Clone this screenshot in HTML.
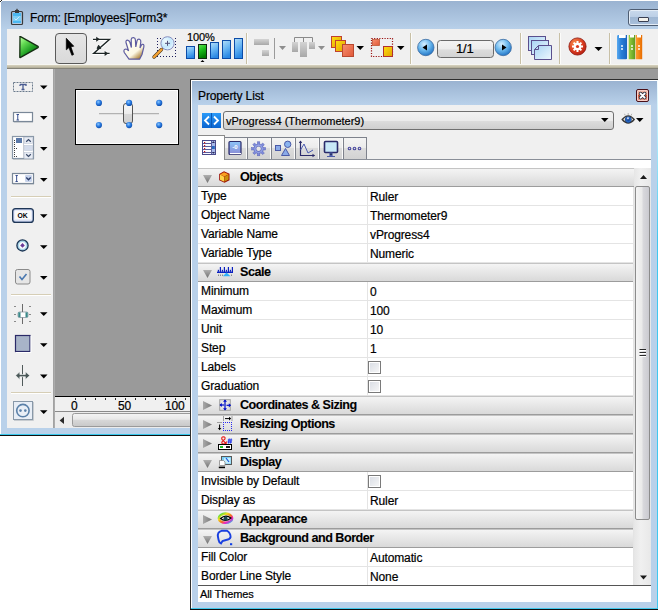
<!DOCTYPE html>
<html><head><meta charset="utf-8">
<style>
*{margin:0;padding:0;box-sizing:border-box}
html,body{width:658px;height:610px;overflow:hidden;background:#fff;font-family:"Liberation Sans",sans-serif;font-size:12px;color:#000}
.a{position:absolute}
svg{position:absolute;overflow:visible}
.sep{position:absolute;width:2px;top:33px;height:31px;background:#c8c0a6;border-right:1px solid #fcfcfa}
.tri{position:absolute;width:0;height:0;border-left:4px solid transparent;border-right:4px solid transparent;border-top:4px solid #000}
.t{position:absolute;white-space:nowrap;line-height:14px}
.t,.rl,.rv{-webkit-text-stroke:0.2px #000;letter-spacing:-0.12px}
.hd{position:absolute;left:198px;width:436px;height:19px;border-top:1px solid #c4c4c4;border-bottom:1px solid #9c9c9c;background:linear-gradient(#f4f4f4,#d9d9d9)}
.ht{position:absolute;left:240px;font-weight:bold;font-size:12.6px;line-height:19px;padding-top:0;letter-spacing:-0.5px;white-space:nowrap;-webkit-text-stroke:0.1px #000 !important}
.rw{position:absolute;left:198px;width:435px;height:19px;border-bottom:1px solid #e4e4e4;background:#fff}
.rw:after{content:"";position:absolute;left:169px;top:0;width:1px;height:18px;background:#e4e4e4}
.rl{position:absolute;left:201px;font-size:12px;line-height:18px;white-space:nowrap}
.rv{position:absolute;left:370px;font-size:12px;line-height:18px;padding-top:1px;white-space:nowrap}
.cb{position:absolute;left:368px;width:13px;height:13px;border:1px solid #7a7a7a;background:linear-gradient(135deg,#d8dce4,#f8f8f8);box-shadow:inset 0 0 0 1px #fff}
</style></head><body>
<!-- ============ MAIN WINDOW ============ -->
<div class="a" style="left:1px;top:1px;width:657px;height:433px;background:#b9d1ea"></div>
<div class="a" style="left:0;top:434px;width:190px;height:1px;background:#38c8ec"></div>
<div class="a" style="left:0;top:435px;width:190px;height:1px;background:#101010"></div>
<div class="a" style="left:1px;top:1px;width:657px;height:28px;background:linear-gradient(#9ab3d1,#b8d0e9)"></div>
<div class="a" style="left:0;top:1px;width:1px;height:1px;background:#222"></div>
<div class="a" style="left:1px;top:0;width:1px;height:1px;background:#222"></div>
<div class="a" style="left:1px;top:1px;width:1px;height:1px;background:#e8eef4"></div>
<!-- title icon -->
<svg style="left:0;top:0" width="40" height="30">
 <rect x="11.5" y="11.5" width="11" height="13" rx="1" fill="none" stroke="#3a3a3a" stroke-width="1.2"/>
 <rect x="13" y="13" width="8" height="10" fill="#4cb8f0"/>
 <rect x="13" y="16" width="8" height="5" fill="#7ccff6"/>
 <rect x="15" y="10" width="4" height="3" fill="#3a3a3a"/>
 <rect x="16.3" y="8.8" width="1.4" height="2" fill="#3a3a3a"/>
 <path d="M14.5 18.5 L16 20 L19.5 16.5" stroke="#d8f0fc" stroke-width="0.9" fill="none"/>
</svg>
<div class="t" style="left:30px;top:11px;font-size:12px;color:#000">Form: [Employees]Form3*</div>
<!-- minimize button -->
<div class="a" style="left:628px;top:9px;width:40px;height:17px;border:1px solid #4e5d72;border-radius:3px;background:linear-gradient(#c9d9ec 0%,#bccfe6 45%,#9fb7d3 50%,#a9c0dc 100%);box-shadow:inset 0 0 0 1px #e4edf7"></div>
<div class="a" style="left:638px;top:17px;width:11px;height:5px;border:1px solid #3a3f52;border-radius:1px;background:#f4f2ec"></div>

<!-- toolbar -->
<div class="a" style="left:7px;top:29px;width:651px;height:36px;background:#f0f0f0"></div>
<div class="a" style="left:7px;top:64px;width:651px;height:1px;background:#f6f6f2"></div>
<div class="a" style="left:7px;top:65px;width:651px;height:1px;background:#d2cdb9"></div>
<div class="a" style="left:7px;top:66px;width:651px;height:1px;background:#c6c1ac"></div>
<div class="a" style="left:7px;top:67px;width:651px;height:1px;background:#b6b19c"></div>
<div class="a" style="left:7px;top:68px;width:651px;height:1px;background:#858379"></div>

<!-- play -->
<svg style="left:0;top:0" width="60" height="64">
 <defs><linearGradient id="gp" x1="0" y1="0.1" x2="0.7" y2="1"><stop offset="0" stop-color="#b0ff98"/><stop offset="0.3" stop-color="#60d850"/><stop offset="0.65" stop-color="#20a024"/><stop offset="1" stop-color="#0a600c"/></linearGradient></defs>
 <path d="M20 37 Q19.5 36.3 20.6 36.7 L38 46.4 Q38.8 47 38 47.6 L20.6 57.4 Q19.5 57.8 19.8 57 Z" fill="url(#gp)" stroke="#142e12" stroke-width="1.3"/>
</svg>
<!-- selected arrow button -->
<div class="a" style="left:55px;top:33px;width:32px;height:31px;border:1px solid #5a5a5a;border-radius:4px;background:linear-gradient(#e6e6e6,#d9d9d9)"></div>
<svg style="left:0;top:0" width="100" height="64">
 <path d="M66.3 38.3 L66.3 49.8 L68.9 47.6 L71.9 55.3 L73.6 54.5 L70.9 46.8 L73.8 46.2 Z" fill="#000" stroke="#000" stroke-width="0.7" stroke-linejoin="round"/>
</svg>
<!-- Z icon -->
<svg style="left:0;top:0" width="120" height="64">
 <g stroke="#fff" stroke-width="3.4" fill="none" stroke-linejoin="round"><path d="M93 39.3 H109.6 L93.6 53.4 H109.6"/></g>
 <g stroke="#1e2626" stroke-width="1.3" fill="none"><path d="M93 39.3 H109.6 L93.6 53.4 H109.6"/></g>
 <path d="M96.2 36.8 L99.8 39.3 L96.2 41.8 Z" fill="#1e2626"/>
 <path d="M104.6 50.9 L108.2 53.4 L104.6 55.9 Z" fill="#1e2626"/>
 <path d="M98.6 45.2 L100.8 48.6 L97 48.4 Z" fill="#1e2626" stroke="#1e2626" stroke-width="0.9"/>
</svg>
<!-- hand -->
<svg style="left:0;top:0" width="150" height="64">
 <defs><linearGradient id="gh" x1="0.2" y1="0.2" x2="0.8" y2="1"><stop offset="0" stop-color="#fffff4"/><stop offset="0.6" stop-color="#fcf8e4"/><stop offset="1" stop-color="#a07020"/></linearGradient></defs>
 <path d="M129 59.2 L124.3 52.5 Q123 49.5 125.8 49 Q127.3 49 128.6 51 L126 42.5 Q125.6 39.8 128 40.3 Q129.3 40.6 130 42.5 L131.4 47.5 L131.2 39.5 Q131.4 37.5 133.6 37.6 Q135.4 37.8 135.4 40 L135.8 47 L137 40.8 Q137.6 38.8 139.6 39.3 Q141 39.8 140.8 42 L140 48 L141.2 45.5 Q142.2 43.6 143.6 44.6 Q144.2 45.3 143.8 47.2 L142 54.5 L139.6 59.2 Z" fill="url(#gh)" stroke="#5e5ca0" stroke-width="1.2"/>
</svg>
<!-- zoom -->
<svg style="left:0;top:0" width="190" height="64">
 <g fill="#1c1c5c">
  <rect x="157" y="38" width="1" height="1"/><rect x="160" y="38" width="1" height="1"/><rect x="175" y="38" width="1" height="1"/>
  <rect x="157" y="41" width="1" height="1"/><rect x="157" y="44" width="1" height="1"/><rect x="157" y="47" width="1" height="1"/><rect x="157" y="50" width="1" height="1"/>
  <rect x="175" y="41" width="1" height="1"/><rect x="175" y="44" width="1" height="1"/><rect x="175" y="47" width="1" height="1"/><rect x="175" y="50" width="1" height="1"/><rect x="175" y="53" width="1" height="1"/>
  <rect x="157" y="56" width="1" height="1"/><rect x="160" y="56" width="1" height="1"/><rect x="163" y="56" width="1" height="1"/><rect x="166" y="56" width="1" height="1"/><rect x="169" y="56" width="1" height="1"/><rect x="172" y="56" width="1" height="1"/><rect x="175" y="56" width="1" height="1"/>
 </g>
 <path d="M161.5 49.5 L154 57" stroke="#4a3a20" stroke-width="3.4" stroke-linecap="round"/>
 <path d="M161.5 49.5 L154 57" stroke="#f4a030" stroke-width="2.4" stroke-linecap="round"/>
 <defs><radialGradient id="gz" cx="0.35" cy="0.35" r="0.7"><stop offset="0" stop-color="#f4fcff"/><stop offset="0.6" stop-color="#c4e8fc"/><stop offset="1" stop-color="#e8f6ff"/></radialGradient></defs>
 <circle cx="167.5" cy="43.3" r="6.6" fill="url(#gz)" stroke="#8890c0" stroke-width="1"/>
 <path d="M165 43.3 H170 M167.5 40.8 V45.8" stroke="#505078" stroke-width="1"/>
</svg>
<!-- 100% -->
<div class="t" style="left:187px;top:31px;font-size:11px;line-height:12px;color:#000">100%</div>
<svg style="left:0;top:0" width="250" height="64">
 <defs>
  <linearGradient id="gb" x1="0" y1="0" x2="0.3" y2="1"><stop offset="0" stop-color="#b4def8"/><stop offset="0.5" stop-color="#6cb8f4"/><stop offset="1" stop-color="#2a88e4"/></linearGradient>
  <linearGradient id="gg" x1="0" y1="0" x2="0.3" y2="1"><stop offset="0" stop-color="#60e850"/><stop offset="0.5" stop-color="#18b818"/><stop offset="1" stop-color="#007a00"/></linearGradient>
 </defs>
 <rect x="186.5" y="46.5" width="8" height="12" fill="url(#gb)" stroke="#0c4ca8"/>
 <rect x="198.5" y="44.5" width="8" height="14" fill="url(#gg)" stroke="#0e2a0e"/>
 <rect x="210.5" y="42.5" width="8" height="16" fill="url(#gb)" stroke="#0c4ca8"/>
 <rect x="222.5" y="40.5" width="8" height="18" fill="url(#gb)" stroke="#0c4ca8"/>
 <rect x="234.5" y="38.5" width="8" height="20" fill="url(#gb)" stroke="#0c4ca8"/>
 <path d="M200.5 62 L202.5 60 L204.5 62 Z" fill="#000"/>
</svg>
<div class="sep" style="left:246px"></div>
<!-- align icons -->
<svg style="left:0;top:0" width="330" height="64">
 <defs><linearGradient id="ga" x1="0" y1="0" x2="0" y2="1"><stop offset="0" stop-color="#d4d4d4"/><stop offset="1" stop-color="#a8a8a8"/></linearGradient></defs>
 <rect x="254" y="39" width="15" height="6" fill="url(#ga)"/>
 <rect x="262" y="50" width="7" height="6" fill="url(#ga)"/>
 <rect x="274" y="38" width="1" height="21" fill="#9a9a9a"/>
 <path d="M279 46 H286 L282.5 50 Z" fill="#8e8e8e"/>
 <path d="M294.5 42 V37.5 H312.5 V42 M303.5 37.5 V42" stroke="#8a8a8a" fill="none"/>
 <rect x="292" y="42" width="6" height="10" fill="url(#ga)"/>
 <rect x="300" y="42" width="7" height="15" fill="url(#ga)"/>
 <rect x="309" y="42" width="6" height="7" fill="url(#ga)"/>
 <path d="M318 46 H325 L321.5 50 Z" fill="#8e8e8e"/>
</svg>
<!-- layers -->
<svg style="left:0;top:0" width="410" height="64">
 <defs>
  <linearGradient id="gy" x1="0" y1="0" x2="1" y2="1"><stop offset="0" stop-color="#ffe010"/><stop offset="1" stop-color="#e0a000"/></linearGradient>
  <linearGradient id="gs" x1="0" y1="0" x2="1" y2="1"><stop offset="0" stop-color="#f89070"/><stop offset="1" stop-color="#e05838"/></linearGradient>
 </defs>
 <rect x="331.5" y="36.5" width="10" height="11" fill="url(#gy)" stroke="#c04030"/>
 <rect x="335.5" y="40.5" width="10" height="11" fill="url(#gy)" stroke="#c04030"/>
 <rect x="342.5" y="44.5" width="11" height="12" fill="url(#gs)" stroke="#b84830"/>
 <path d="M356.5 46 H364 L360.25 50 Z" fill="#000"/>
 <rect x="371.5" y="38.5" width="21" height="18" fill="none" stroke="#9a1010" stroke-width="1.2" stroke-dasharray="1.2 1.4"/>
 <rect x="372.5" y="39.5" width="7" height="6" fill="url(#gs)" stroke="#c05838" stroke-width="0.8"/>
 <rect x="383.5" y="46.5" width="9" height="10" fill="url(#gy)" stroke="#b03030"/>
 <path d="M397 46 H404.5 L400.75 50 Z" fill="#000"/>
</svg>
<div class="sep" style="left:410px"></div>
<!-- nav -->
<svg style="left:0;top:0" width="520" height="64">
 <defs>
  <radialGradient id="gn" cx="0.4" cy="0.3" r="0.75"><stop offset="0" stop-color="#d8f0ff"/><stop offset="0.5" stop-color="#6ab8ee"/><stop offset="1" stop-color="#1a6cc0"/></radialGradient>
  <linearGradient id="gpb" x1="0" y1="0" x2="0" y2="1"><stop offset="0" stop-color="#f4f4f4"/><stop offset="0.5" stop-color="#ececec"/><stop offset="0.55" stop-color="#dcdcdc"/><stop offset="1" stop-color="#d2d2d2"/></linearGradient>
 </defs>
 <circle cx="425.8" cy="47.5" r="8.2" fill="url(#gn)" stroke="#3a6aa0" stroke-width="0.8"/>
 <path d="M422.5 47.5 L427 44.5 V50.5 Z" fill="#000"/>
 <circle cx="503.2" cy="47.5" r="8.2" fill="url(#gn)" stroke="#3a6aa0" stroke-width="0.8"/>
 <path d="M506.5 47.5 L502 44.5 V50.5 Z" fill="#000"/>
 <rect x="437.5" y="40.5" width="56" height="17" rx="3" fill="url(#gpb)" stroke="#6a6a6a"/>
</svg>
<div class="t" style="left:456px;top:42px;font-size:13px;line-height:14px">1/1</div>
<div class="sep" style="left:520px"></div>
<!-- pages -->
<svg style="left:0;top:0" width="560" height="64">
 <defs><linearGradient id="gpg" x1="0" y1="0" x2="1" y2="1"><stop offset="0" stop-color="#a8d4f4"/><stop offset="1" stop-color="#eef8fe"/></linearGradient></defs>
 <rect x="528.5" y="36.5" width="17" height="14" fill="url(#gpg)" stroke="#5a4f8e"/>
 <rect x="531.5" y="40.5" width="17" height="14" fill="url(#gpg)" stroke="#5a4f8e"/>
 <path d="M538.5 45.5 H551.5 V59.5 H534.5 V49.5 Z" fill="url(#gpg)" stroke="#5a4f8e"/>
 <path d="M534.5 49.5 H538.5 V45.5" fill="none" stroke="#5a4f8e"/>
</svg>
<div class="sep" style="left:559px"></div>
<!-- gear -->
<svg style="left:0;top:0" width="610" height="64">
 <defs><radialGradient id="gr" cx="0.35" cy="0.3" r="0.8"><stop offset="0" stop-color="#f88a4a"/><stop offset="0.6" stop-color="#d83a20"/><stop offset="1" stop-color="#b01c10"/></radialGradient></defs>
 <circle cx="577.5" cy="46.5" r="8.6" fill="url(#gr)" stroke="#8a1008" stroke-width="0.8"/>
 <g fill="#fff">
  <circle cx="577.5" cy="46.5" r="3.8"/>
  <rect x="576.5" y="41" width="2" height="11"/>
  <rect x="572" y="45.5" width="11" height="2"/>
  <rect x="576.5" y="41" width="2" height="11" transform="rotate(45 577.5 46.5)"/>
  <rect x="576.5" y="41" width="2" height="11" transform="rotate(-45 577.5 46.5)"/>
 </g>
 <circle cx="577.5" cy="46.5" r="1.6" fill="#d83a20"/>
 <path d="M594.5 47 H602.5 L598.5 51 Z" fill="#000"/>
</svg>
<div class="sep" style="left:609px"></div>
<!-- books -->
<svg style="left:0;top:0" width="658" height="64">
 <defs>
  <linearGradient id="bk1" x1="0" y1="0" x2="1" y2="0"><stop offset="0" stop-color="#5aaaf0"/><stop offset="0.4" stop-color="#2a80d8"/><stop offset="1" stop-color="#1a64c0"/></linearGradient>
  <linearGradient id="bk2" x1="0" y1="0" x2="1" y2="0"><stop offset="0" stop-color="#9ad040"/><stop offset="1" stop-color="#5a9a20"/></linearGradient>
  <linearGradient id="bk3" x1="0" y1="0" x2="1" y2="0"><stop offset="0" stop-color="#ffa030"/><stop offset="1" stop-color="#e86c00"/></linearGradient>
 </defs>
 <path d="M617 36.5 Q617 35 618 35 L619 35 L619 37.5 L625.5 37.5 L625.5 35 L627 35 L627 58.5 Q627 59.3 626 59.3 L618 59.3 Q617 59.3 617 58.5 Z" fill="url(#bk1)"/>
 <rect x="619" y="35" width="6.5" height="3" fill="#fff"/><rect x="630" y="35" width="4" height="3" fill="#fff"/><rect x="637" y="35" width="4" height="3" fill="#fff"/>
 <path d="M628.7 35 H630 V37.5 H634 V35 H635.2 V59.3 H628.7 Z" fill="url(#bk2)"/>
 <path d="M635.7 35 H637 V37.5 H641 V35 H642.2 V59.3 H635.7 Z" fill="url(#bk3)"/>
 <g fill="#fff" opacity="0.7"><rect x="621" y="45" width="2" height="2"/><rect x="621" y="48" width="2" height="2"/><rect x="631" y="45" width="2" height="2"/><rect x="631" y="48" width="2" height="2"/><rect x="638" y="45" width="2" height="2"/><rect x="638" y="48" width="2" height="2"/></g>
</svg>

<!-- left panel -->
<div class="a" style="left:7px;top:69px;width:46px;height:359px;background:#f0f0f0"></div>
<div class="a" style="left:53px;top:69px;width:1px;height:359px;background:#a2a2a2"></div>
<div class="a" style="left:54px;top:69px;width:1px;height:359px;background:#acacac"></div>
<!-- canvas -->
<div class="a" style="left:55px;top:69px;width:603px;height:327px;background:#9a9a9a"></div>
<div class="a" style="left:55px;top:396px;width:135px;height:1px;background:#000"></div>
<div class="a" style="left:55px;top:397px;width:135px;height:14px;background:#f0f0f0"></div>
<div class="a" style="left:55px;top:411px;width:135px;height:1px;background:#8a8a8a"></div>
<div class="a" style="left:55px;top:412px;width:135px;height:16px;background:#ececec"></div>

<!-- left panel icons -->
<svg style="left:0;top:0" width="56" height="430">
 <defs>
  <linearGradient id="lsh" x1="0" y1="0" x2="0" y2="1"><stop offset="0" stop-color="#fff"/><stop offset="1" stop-color="#eef0f4"/></linearGradient>
 </defs>
 <!-- dotted T -->
 <rect x="13.5" y="82.5" width="19" height="9" fill="none" stroke="#6a7a8c" stroke-dasharray="2 1"/>
 <path d="M20 84.5 H26 V86 M20 84.5 V86 M23 84.5 V89.5 M21.5 89.5 H24.5" stroke="#4a5c92" stroke-width="1.3" fill="none"/>
 <!-- text field -->
 <rect x="13.5" y="112.5" width="19" height="9" fill="#fff" stroke="#7a8898" stroke-width="1.2"/>
 <path d="M14 122.5 H33" stroke="#c8ccd0" stroke-width="1"/>
 <path d="M16.5 114.5 H19 M16.5 120 H19 M17.75 114.5 V120" stroke="#3a5090" stroke-width="1" fill="none"/>
 <!-- list box -->
 <rect x="12.5" y="136.5" width="21" height="22" fill="#fff" stroke="#8a98a8" stroke-width="1.2"/>
 <path d="M13 159.5 H34" stroke="#c0c4c8"/>
 <rect x="23" y="137" width="1" height="21" fill="#c8ccd4"/>
 <rect x="16" y="138" width="6" height="5" fill="#5a78a8"/>
 <g fill="#404040"><rect x="14" y="140" width="1" height="1"/><rect x="14" y="142" width="1" height="1"/><rect x="14" y="144" width="1" height="1"/><rect x="14" y="146" width="1" height="1"/><rect x="14" y="148" width="1" height="1"/><rect x="16" y="148" width="1" height="1"/><rect x="14" y="150" width="1" height="1"/><rect x="14" y="152" width="1" height="1"/><rect x="14" y="154" width="1" height="1"/><rect x="14" y="156" width="1" height="1"/><rect x="16" y="156" width="1" height="1"/></g>
 <rect x="24.5" y="137.5" width="8" height="6" fill="#e8ecf4" stroke="#c0c8d8" stroke-width="0.6"/>
 <rect x="24.5" y="145.5" width="8" height="5" fill="#d4dcec" stroke="#c0c8d8" stroke-width="0.6"/>
 <rect x="24.5" y="152.5" width="8" height="6" fill="#e8ecf4" stroke="#c0c8d8" stroke-width="0.6"/>
 <path d="M26.2 141.8 L28.5 139.6 L30.8 141.8" stroke="#3a4a6a" stroke-width="1.2" fill="none"/>
 <path d="M26.2 154.2 L28.5 156.4 L30.8 154.2" stroke="#3a4a6a" stroke-width="1.2" fill="none"/>
 <!-- combo -->
 <rect x="12.5" y="173.5" width="21" height="10" fill="#fff" stroke="#7a8898" stroke-width="1.2"/>
 <path d="M13 184.5 H34" stroke="#c8ccd0"/>
 <path d="M15.5 175.5 H17.8 M15.5 181.5 H17.8 M16.65 175.5 V181.5" stroke="#3a5090" stroke-width="1" fill="none"/>
 <rect x="25" y="175" width="7" height="7" rx="1" fill="#c8d4ec"/>
 <path d="M26.3 177.5 L28.5 179.8 L30.7 177.5" stroke="#2a3c6a" stroke-width="1.3" fill="none"/>
 <!-- separators -->
 <g fill="#d6ceb6"><rect x="11" y="196" width="40" height="1"/><rect x="11" y="294" width="40" height="1"/><rect x="11" y="392" width="40" height="1"/></g>
 <g fill="#fff"><rect x="11" y="197" width="40" height="1"/><rect x="11" y="295" width="40" height="1"/><rect x="11" y="393" width="40" height="1"/></g>
 <!-- OK button -->
 <rect x="12.6" y="208.6" width="20.8" height="13.8" rx="3" fill="#b4c0e0" stroke="#1e3656" stroke-width="1.2"/>
 <rect x="14" y="210" width="18" height="10.8" rx="1.5" fill="#e8ecf8"/>
 <rect x="15" y="211" width="16" height="8" fill="#fafafa"/>
 <text x="22.6" y="218" font-family="Liberation Sans" font-weight="bold" font-size="7.2" text-anchor="middle" fill="#000" transform="translate(22.6 0) scale(0.95 1) translate(-22.6 0)">OK</text>
 <!-- radio -->
 <circle cx="22.5" cy="245.4" r="5.6" fill="#a8d4e8" stroke="#1a3454" stroke-width="1.3"/>
 <circle cx="22.5" cy="245.4" r="3.4" fill="#fafcfd"/>
 <path d="M22.5 243.1 L24.8 245.4 L22.5 247.7 L20.2 245.4 Z" fill="#6a3a98"/>
 <!-- checkbox -->
 <rect x="15.5" y="269.5" width="14.5" height="14.5" rx="2" fill="#e6e6e6" stroke="#8a8a8a" stroke-width="1"/>
 <path d="M19.5 276.5 L22 279.5 L26.5 274" stroke="#4a78b0" stroke-width="1.6" fill="none"/>
 <!-- slider -->
 <rect x="22" y="304" width="1" height="20" fill="#6a6a6a"/>
 <g fill="#8a8a8a"><rect x="14" y="306" width="2" height="1"/><rect x="29" y="306" width="2" height="1"/><rect x="14" y="314" width="2" height="1"/><rect x="29" y="314" width="2" height="1"/><rect x="14" y="321" width="2" height="1"/><rect x="29" y="321" width="2" height="1"/></g>
 <rect x="18" y="312" width="10" height="5.5" rx="1.5" fill="#fff" stroke="#6a7888" stroke-width="0.6"/>
 <rect x="18.3" y="312.3" width="2.2" height="5" fill="#3a8a8a"/>
 <rect x="25.5" y="312.3" width="2.2" height="5" fill="#3a8a8a"/>
 <!-- rect -->
 <rect x="15.5" y="335.5" width="14.5" height="16" fill="#a8b4c8" stroke="#2a2a68" stroke-width="1.2"/>
 <path d="M16 352.5 H31 V336" stroke="#fff" stroke-width="1" fill="none"/>
 <!-- splitter -->
 <rect x="22" y="365" width="1" height="21" fill="#505a5a"/>
 <path d="M15.6 375.6 L19.8 371.8 V374.5 H25.4 V371.8 L29.8 375.6 L25.4 379.4 V376.7 H19.8 V379.4 Z" fill="#4a5858" stroke="#f8f8f8" stroke-width="0.6"/>
 <!-- plugin -->
 <rect x="13.5" y="401.5" width="19" height="18" fill="#e8eef6" stroke="#8898a8" stroke-width="1"/>
 <path d="M14 420.5 H33.5 V402" stroke="#c8ccd0" fill="none"/>
 <circle cx="22.9" cy="410.6" r="6.2" fill="none" stroke="#5a80a8" stroke-width="1.6"/>
 <circle cx="20.5" cy="410.6" r="1.3" fill="#5a80a8"/>
 <circle cx="25.3" cy="410.6" r="1.3" fill="#5a80a8"/>
 <!-- arrows -->
 <g fill="#000">
  <path d="M40 85.5 H47.5 L43.75 89.2 Z"/>
  <path d="M40 116 H47.5 L43.75 119.8 Z"/>
  <path d="M40 147 H47.5 L43.75 150.8 Z"/>
  <path d="M40 178 H47.5 L43.75 181.8 Z"/>
  <path d="M40 214.2 H47.5 L43.75 218 Z"/>
  <path d="M40 245.2 H47.5 L43.75 249 Z"/>
  <path d="M40 276 H47.5 L43.75 279.8 Z"/>
  <path d="M40 312.3 H47.5 L43.75 316.1 Z"/>
  <path d="M40 343.2 H47.5 L43.75 347 Z"/>
  <path d="M40 374.6 H47.5 L43.75 378.4 Z"/>
  <path d="M40 410.2 H47.5 L43.75 414 Z"/>
 </g>
</svg>

<!-- form object -->
<div class="a" style="left:75px;top:89px;width:104px;height:56px;border:1px solid #000;background:#f0f0f0;box-shadow:inset 0 0 0 1px #fff"></div>
<svg style="left:0;top:0" width="190" height="150">
 <defs><radialGradient id="hd" cx="0.4" cy="0.35" r="0.7"><stop offset="0" stop-color="#8ac8ff"/><stop offset="0.5" stop-color="#2a7ae0"/><stop offset="1" stop-color="#0a4aa8"/></radialGradient>
 <linearGradient id="th" x1="0" y1="0" x2="0" y2="1"><stop offset="0" stop-color="#f8f8f8"/><stop offset="0.5" stop-color="#ececec"/><stop offset="0.52" stop-color="#d8d8d8"/><stop offset="1" stop-color="#d0d0d0"/></linearGradient></defs>
 <rect x="99" y="113.2" width="60" height="1" fill="#a4a4a4"/>
 <rect x="123.5" y="103.5" width="9" height="20" rx="2.5" fill="url(#th)" stroke="#555" stroke-width="1"/>
 <circle cx="98.9" cy="102.9" r="3.1" fill="url(#hd)"/>
 <circle cx="129.1" cy="102.9" r="3.1" fill="url(#hd)"/>
 <circle cx="159.2" cy="102.9" r="3.1" fill="url(#hd)"/>
 <circle cx="98.9" cy="125.1" r="3.1" fill="url(#hd)"/>
 <circle cx="129.1" cy="125.1" r="3.1" fill="url(#hd)"/>
 <circle cx="159.2" cy="125.1" r="3.1" fill="url(#hd)"/>
</svg>
<!-- ruler -->
<svg style="left:0;top:0" width="190" height="430">
 <g fill="#333"><rect x="75" y="398" width="1" height="2"/><rect x="85" y="398" width="1" height="2"/><rect x="95" y="398" width="1" height="2"/><rect x="105" y="398" width="1" height="2"/><rect x="115" y="398" width="1" height="2"/><rect x="125" y="398" width="1" height="2"/><rect x="135" y="398" width="1" height="2"/><rect x="145" y="398" width="1" height="2"/><rect x="155" y="398" width="1" height="2"/><rect x="165" y="398" width="1" height="2"/><rect x="175" y="398" width="1" height="2"/><rect x="185" y="398" width="1" height="2"/></g>
 <path d="M64 416.8 V424 L59.6 420.4 Z" fill="#2a2a2a"/>
 <defs><linearGradient id="sth" x1="0" y1="0" x2="0" y2="1"><stop offset="0" stop-color="#f4f4f4"/><stop offset="0.45" stop-color="#e8e8e8"/><stop offset="0.5" stop-color="#d8d8d8"/><stop offset="1" stop-color="#c8c8c8"/></linearGradient></defs>
 <rect x="72.5" y="413.5" width="130" height="13" rx="2" fill="url(#sth)" stroke="#9a9a9a"/>
</svg>
<div class="t" style="left:71px;top:400px;font-size:12px;line-height:12px">0</div>
<div class="t" style="left:118px;top:400px;font-size:12px;line-height:12px">50</div>
<div class="t" style="left:165px;top:400px;font-size:12px;line-height:12px">100</div>

<!-- ============ PROPERTY PANEL ============ -->
<div class="a" style="left:190px;top:79px;width:468px;height:531px;background:#b9d1ea"></div>
<div class="a" style="left:190px;top:79px;width:468px;height:1px;background:#2e2e2e"></div>
<div class="a" style="left:190px;top:79px;width:1px;height:531px;background:#2e2e2e"></div>
<div class="a" style="left:191px;top:80px;width:467px;height:1px;background:#fff"></div>
<div class="a" style="left:191px;top:80px;width:1px;height:529px;background:#fff"></div>
<div class="a" style="left:192px;top:81px;width:465px;height:24px;background:linear-gradient(#9ab3d1,#b9d1ea)"></div>
<div class="a" style="left:657px;top:80px;width:1px;height:530px;background:linear-gradient(#f4fcff,#40c8f0 30%,#40c8f0)"></div>
<div class="a" style="left:191px;top:608px;width:467px;height:1px;background:#40c8ec"></div>
<div class="a" style="left:190px;top:609px;width:468px;height:1px;background:#101010"></div>
<div class="t" style="left:198px;top:89px;font-size:12px">Property List</div>
<!-- close btn -->
<div class="a" style="left:636px;top:89px;width:13px;height:13px;border:1px solid #4a1018;border-radius:2px;background:linear-gradient(#f4c0b4,#e89880 40%,#d05030 50%,#d86448 60%,#f0b0a0);box-shadow:inset 0 0 0 1px #f8d0c8"></div>
<svg style="left:0;top:0" width="658" height="110">
 <path d="M640.6 93.6 L644.6 97.6 M644.6 93.6 L640.6 97.6" stroke="#2a3040" stroke-width="3.6" stroke-linecap="round"/>
 <path d="M640.6 93.6 L644.6 97.6 M644.6 93.6 L640.6 97.6" stroke="#fff" stroke-width="2" stroke-linecap="round"/>
</svg>
<!-- content bg -->
<div class="a" style="left:198px;top:105px;width:453px;height:497px;background:#f0f0f0"></div>
<div class="a" style="left:198px;top:160px;width:453px;height:442px;background:#fff"></div>
<!-- <> icon -->
<svg style="left:0;top:0" width="658" height="160">
 <defs><linearGradient id="gi" x1="0" y1="0" x2="0" y2="1"><stop offset="0" stop-color="#2a9af8"/><stop offset="1" stop-color="#0a64d0"/></linearGradient></defs>
 <rect x="202" y="113" width="19" height="15" fill="url(#gi)"/>
 <rect x="211" y="113" width="1" height="15" fill="#0a58b8"/>
 <path d="M209 116.5 L205 120.5 L209 124.5 M214 116.5 L218 120.5 L214 124.5" stroke="#fff" stroke-width="1.8" fill="none"/>
</svg>
<!-- combo -->
<div class="a" style="left:223px;top:111px;width:391px;height:19px;border:1px solid #707070;border-radius:3px;background:linear-gradient(#f2f2f2 0%,#ebebeb 50%,#dddddd 51%,#cfcfcf 100%)"></div>
<div class="t" style="left:226px;top:114px;font-size:11px;letter-spacing:0">vProgress4 (Thermometer9)</div>
<svg style="left:0;top:0" width="658" height="160">
 <path d="M601 118 H608.5 L604.75 122 Z" fill="#000"/>
 <!-- eye -->
 <defs><radialGradient id="ge" cx="0.5" cy="0.5" r="0.5"><stop offset="0" stop-color="#0a3a8a"/><stop offset="0.7" stop-color="#2a6ac8"/><stop offset="1" stop-color="#1a3a6a"/></radialGradient></defs>
 <path d="M624.5 113.8 L625.3 115.6 M628.2 113 V115 M631.8 113.8 L631 115.6" stroke="#9a9a9a" stroke-width="0.7"/>
 <path d="M622.2 119.5 Q628.2 112.2 634.2 119.5 Q628.2 126.6 622.2 119.5 Z" fill="#f4ece0" stroke="#383838" stroke-width="1.3"/>
 <circle cx="628.3" cy="119.6" r="3.4" fill="url(#ge)"/>
 <ellipse cx="628" cy="118.2" rx="0.7" ry="1.2" fill="#e8f0ff"/>
 <path d="M636 118 H643.5 L639.75 122 Z" fill="#000"/>
</svg>
<!-- tabs -->
<div class="a" style="left:198px;top:135px;width:27px;height:25px;background:#fff;border-top:1px solid #8a8a8a;border-right:1px solid #8a8a8a"></div>
<div class="a" style="left:225px;top:159px;width:426px;height:1px;background:#8a8f98"></div>
<div class="a" style="left:225px;top:137px;width:142px;height:22px;border-top:1px solid #7e828c;border-right:1px solid #7e828c;background:linear-gradient(#f4f4f4 0%,#ececec 45%,#dcdcdc 50%,#d2d2d2 100%)"></div>
<div class="a" style="left:246px;top:138px;width:1px;height:21px;background:#fafafa"></div>
<div class="a" style="left:247px;top:138px;width:1px;height:21px;background:#7e828c"></div>
<div class="a" style="left:270px;top:138px;width:1px;height:21px;background:#fafafa"></div>
<div class="a" style="left:271px;top:138px;width:1px;height:21px;background:#7e828c"></div>
<div class="a" style="left:294px;top:138px;width:1px;height:21px;background:#fafafa"></div>
<div class="a" style="left:295px;top:138px;width:1px;height:21px;background:#7e828c"></div>
<div class="a" style="left:318px;top:138px;width:1px;height:21px;background:#fafafa"></div>
<div class="a" style="left:319px;top:138px;width:1px;height:21px;background:#7e828c"></div>
<div class="a" style="left:342px;top:138px;width:1px;height:21px;background:#fafafa"></div>
<div class="a" style="left:343px;top:138px;width:1px;height:21px;background:#7e828c"></div>
<svg style="left:0;top:0" width="658" height="160">
 <defs>
  <linearGradient id="gt" x1="0" y1="0" x2="0" y2="1"><stop offset="0" stop-color="#8cc4f8"/><stop offset="1" stop-color="#8a8ad4"/></linearGradient>
 </defs>
 <!-- list icon -->
 <rect x="202.5" y="140.5" width="13" height="14" fill="#fafaff" stroke="#4a4a8a"/>
 <g stroke="#5a5a9a" stroke-width="1"><path d="M203 143.5 H211 M203 146.5 H211 M203 149.5 H211 M203 152.5 H211"/></g>
 <rect x="211" y="141" width="4" height="13" fill="#a8b8e8"/>
 <rect x="211" y="141" width="0.8" height="13" fill="#4a4a8a"/>
 <path d="M211.8 143 L213.4 141.2 L215 143 Z M211.8 152 L213.4 153.8 L215 152 Z" fill="#2a2a5a"/>
 <rect x="212" y="146" width="2.8" height="3" fill="#2a6ac0"/>
 <g fill="#d01010"><rect x="204" y="142" width="1.2" height="1.2"/><rect x="204" y="145" width="1.2" height="1.2"/><rect x="204" y="148" width="1.2" height="1.2"/><rect x="204" y="151" width="1.2" height="1.2"/></g>
 <!-- book -->
 <rect x="229" y="141.5" width="12" height="13" rx="1" fill="url(#gt)" stroke="#2a2a6a" stroke-width="1.2"/>
 <rect x="230" y="153" width="11" height="1.2" fill="#fff"/>
 <text x="235" y="149" font-family="Liberation Sans" font-size="6" font-weight="bold" fill="#fff" text-anchor="middle">-0</text>
 <!-- gear -->
 <g fill="#7c88d8" stroke="#5a64b8" stroke-width="0.5">
  <circle cx="258.6" cy="148.8" r="4.8"/>
  <rect x="257.4" y="141.8" width="2.4" height="14"/>
  <rect x="251.6" y="147.6" width="14" height="2.4"/>
  <rect x="257.4" y="141.8" width="2.4" height="14" transform="rotate(45 258.6 148.8)"/>
  <rect x="257.4" y="141.8" width="2.4" height="14" transform="rotate(-45 258.6 148.8)"/>
 </g>
 <circle cx="258.6" cy="148.8" r="4.3" fill="#94a2e4"/>
 <circle cx="258.6" cy="148.8" r="2.9" fill="#5a64b8"/>
 <circle cx="258.6" cy="148.8" r="2.3" fill="#e6e6e6"/>
 <!-- shapes -->
 <rect x="275.5" y="145.5" width="5" height="5" fill="#8aaae8" stroke="#4a5aa8"/>
 <circle cx="287.7" cy="144.3" r="3.2" fill="#8ab4f0" stroke="#4a5aa8"/>
 <path d="M285.5 148.5 L289.5 155.5 H281.5 Z" fill="#8aaae8" stroke="#4a5aa8"/>
 <!-- graph -->
 <path d="M300.5 141 V155.5 H314.5" stroke="#2a2a6a" stroke-width="1.2" fill="none"/>
 <path d="M298.8 143 L300.5 140.5 L302.2 143 Z M312.5 153.8 L315 155.5 L312.5 157.2 Z" fill="#2a2a6a"/>
 <path d="M300.5 150 L304 144 L308 153 L313 150" stroke="#4a5ab0" stroke-width="1" fill="none"/>
 <!-- monitor -->
 <rect x="324.5" y="141.5" width="13" height="11" rx="1" fill="#c8e8f8" stroke="#2a2a6a" stroke-width="1.6"/>
 <path d="M330 153 H332 V155.5 H330 Z M327 156.5 H335" stroke="#4a5aa8" stroke-width="1.2"/>
 <!-- dots -->
 <g fill="none" stroke="#4a4aa0" stroke-width="1.1"><circle cx="349.5" cy="148.5" r="1.3"/><circle cx="354.5" cy="148.5" r="1.3"/><circle cx="359.5" cy="148.5" r="1.3"/></g>
</svg>

<!-- GRID START -->
<div class="hd" style="top:168px"></div><div class="ht" style="top:168px">Objects</div>
<div class="rw" style="top:187px"></div><div class="rl" style="top:187px">Type</div>
<div class="rv" style="top:187px">Ruler</div>
<div class="rw" style="top:206px"></div><div class="rl" style="top:206px">Object Name</div>
<div class="rv" style="top:206px">Thermometer9</div>
<div class="rw" style="top:225px"></div><div class="rl" style="top:225px">Variable Name</div>
<div class="rv" style="top:225px">vProgress4</div>
<div class="rw" style="top:244px"></div><div class="rl" style="top:244px">Variable Type</div>
<div class="rv" style="top:244px">Numeric</div>
<div class="hd" style="top:263px"></div><div class="ht" style="top:263px">Scale</div>
<div class="rw" style="top:282px"></div><div class="rl" style="top:282px">Minimum</div>
<div class="rv" style="top:282px">0</div>
<div class="rw" style="top:301px"></div><div class="rl" style="top:301px">Maximum</div>
<div class="rv" style="top:301px">100</div>
<div class="rw" style="top:320px"></div><div class="rl" style="top:320px">Unit</div>
<div class="rv" style="top:320px">10</div>
<div class="rw" style="top:339px"></div><div class="rl" style="top:339px">Step</div>
<div class="rv" style="top:339px">1</div>
<div class="rw" style="top:358px"></div><div class="rl" style="top:358px">Labels</div>
<div class="cb" style="top:361px"></div>
<div class="rw" style="top:377px"></div><div class="rl" style="top:377px">Graduation</div>
<div class="cb" style="top:380px"></div>
<div class="hd" style="top:396px"></div><div class="ht" style="top:396px">Coordinates &amp; Sizing</div>
<div class="hd" style="top:415px"></div><div class="ht" style="top:415px">Resizing Options</div>
<div class="hd" style="top:434px"></div><div class="ht" style="top:434px">Entry</div>
<div class="hd" style="top:453px"></div><div class="ht" style="top:453px">Display</div>
<div class="rw" style="top:472px"></div><div class="rl" style="top:472px">Invisible by Default</div>
<div class="cb" style="top:475px"></div>
<div class="rw" style="top:491px"></div><div class="rl" style="top:491px">Display as</div>
<div class="rv" style="top:491px">Ruler</div>
<div class="hd" style="top:510px"></div><div class="ht" style="top:510px">Appearance</div>
<div class="hd" style="top:529px"></div><div class="ht" style="top:529px">Background and Border</div>
<div class="rw" style="top:548px"></div><div class="rl" style="top:548px">Fill Color</div>
<div class="rv" style="top:548px">Automatic</div>
<div class="rw" style="top:567px"></div><div class="rl" style="top:567px">Border Line Style</div>
<div class="rv" style="top:567px">None</div>
<svg style="left:0;top:0" width="658" height="610">
 <defs>
  <linearGradient id="trd" x1="0" y1="0" x2="0" y2="1"><stop offset="0" stop-color="#b0b0b0"/><stop offset="1" stop-color="#707070"/></linearGradient>
  <linearGradient id="trr" x1="0" y1="0" x2="1" y2="0"><stop offset="0" stop-color="#a8a8a8"/><stop offset="1" stop-color="#787878"/></linearGradient>
 </defs>
 <path d="M203 175 H212 L207.5 183 Z" fill="url(#trd)"/>
 <path d="M203 270 H212 L207.5 278 Z" fill="url(#trd)"/>
 <path d="M203 401 L212 405.5 L203 410 Z" fill="url(#trr)"/>
 <path d="M203 420 L212 424.5 L203 429 Z" fill="url(#trr)"/>
 <path d="M203 439 L212 443.5 L203 448 Z" fill="url(#trr)"/>
 <path d="M203 460 H212 L207.5 468 Z" fill="url(#trd)"/>
 <path d="M203 515 L212 519.5 L203 524 Z" fill="url(#trr)"/>
 <path d="M203 536 H212 L207.5 544 Z" fill="url(#trd)"/>
 <!-- cube -->
 <path d="M224 171.3 L229.5 173.8 L229.5 180.2 L224.5 182.7 L219.2 180.2 L219.2 174 Z" fill="#9a0a00"/>
 <path d="M224 172.3 L228.6 174.3 L224.3 176.6 L220 174.4 Z" fill="#f8a020"/>
 <path d="M220 174.6 L224.2 176.8 L224.2 181.8 L220 179.8 Z" fill="#ffd448"/>
 <path d="M224.5 176.8 L228.6 174.5 L228.6 179.6 L224.5 181.8 Z" fill="#c8900c"/>
 <!-- scale -->
 <g fill="#0a20c0">
  <rect x="217" y="271.6" width="16" height="1.4"/>
  <rect x="219.8" y="267" width="1.2" height="5"/><rect x="223.8" y="267" width="1.2" height="5"/><rect x="227.8" y="267" width="1.2" height="5"/><rect x="231.8" y="267" width="1.2" height="5"/>
  <rect x="217.8" y="269.8" width="1.2" height="2"/><rect x="221.8" y="269.8" width="1.2" height="2"/><rect x="225.8" y="269.8" width="1.2" height="2"/><rect x="229.8" y="269.8" width="1.2" height="2"/>
 </g>
 <g fill="#8a8a8a"><rect x="218" y="274.5" width="1" height="1.5"/><rect x="220" y="274.5" width="1" height="1.5"/><rect x="222" y="274.5" width="1" height="1.5"/><rect x="231" y="274.5" width="1" height="1.5"/></g>
 <path d="M226.5 272.5 L230.5 276.3 H222.8 Z" fill="#30b0f8"/>
 <!-- coordinates -->
 <rect x="219.7" y="399.7" width="10.6" height="10.6" fill="#e4e4e4" stroke="#a0a0a0" stroke-width="1"/>
 <g fill="#0010c8">
  <rect x="224.4" y="400" width="1.2" height="4"/><path d="M223 401.8 L225 399.5 L227 401.8 Z"/>
  <rect x="224.4" y="406" width="1.2" height="4"/><path d="M223 408.2 L225 410.5 L227 408.2 Z"/>
  <rect x="220" y="404.4" width="4" height="1.2"/><path d="M221.8 403 L219.5 405 L221.8 407 Z"/>
  <rect x="226.5" y="404.7" width="4" height="1.2"/><path d="M228.8 403.2 L231 405.3 L228.8 407.4 Z"/>
  <rect x="224.2" y="404.2" width="1.6" height="1.6"/>
 </g>
 <!-- resizing -->
 <g fill="#a0a0a0"><rect x="223" y="416" width="1" height="5"/><rect x="231.5" y="416" width="1" height="5"/><rect x="217" y="422" width="5" height="1"/></g>
 <path d="M225.2 418.6 H229.5" stroke="#000" stroke-width="1"/><path d="M229 416.8 L231.2 418.6 L229 420.4 Z" fill="#000"/>
 <rect x="225" y="418.2" width="0.8" height="0.8" fill="#000"/>
 <path d="M219.6 424.5 V428.5" stroke="#000" stroke-width="1"/><path d="M217.8 428 L219.6 430.3 L221.4 428 Z" fill="#000"/>
 <g fill="#2828f0"><rect x="223" y="422" width="1" height="1"/><rect x="223" y="430" width="1" height="1"/><rect x="225" y="422" width="1" height="1"/><rect x="225" y="430" width="1" height="1"/><rect x="227" y="422" width="1" height="1"/><rect x="227" y="430" width="1" height="1"/><rect x="229" y="422" width="1" height="1"/><rect x="229" y="430" width="1" height="1"/><rect x="231" y="422" width="1" height="1"/><rect x="231" y="430" width="1" height="1"/><rect x="223" y="424" width="1" height="1"/><rect x="231" y="424" width="1" height="1"/><rect x="223" y="426" width="1" height="1"/><rect x="231" y="426" width="1" height="1"/><rect x="223" y="428" width="1" height="1"/><rect x="231" y="428" width="1" height="1"/></g>
 <!-- entry -->
 <path d="M226.5 444 L222 439.5 Q221 437 223.5 436.8 Q225.8 437 224.8 439.2 L222.2 441.5 Q221 443.8 223.5 444 Q225.5 444 227 441.5" fill="none" stroke="#e81818" stroke-width="1.1"/>
 <path d="M229.2 438.5 L228.6 443.5 M231.2 438.5 L230.6 443.5 M227.8 440 H232.2 M227.6 442 H232" stroke="#1a30e8" stroke-width="1"/>
 <rect x="218.5" y="444.5" width="13" height="5" fill="#fff" stroke="#000" stroke-width="1"/>
 <rect x="220" y="446" width="3" height="2" fill="#20c020"/>
 <rect x="226" y="446" width="4" height="2" fill="#202020"/>
 <!-- display -->
 <rect x="221.5" y="456.5" width="10" height="8" fill="#7ad0f4" stroke="#585858" stroke-width="1"/>
 <rect x="224" y="458" width="6.5" height="5.5" fill="#c8eefc"/>
 <path d="M226 458 L229 462" stroke="#1a5ae0" stroke-width="1.2"/>
 <path d="M219.5 460.5 H223.5 L225 462 V465.5 H219.5 Z" fill="#fff" stroke="#8a8a8a" stroke-width="0.8"/>
 <rect x="218.8" y="466.6" width="6.2" height="1.6" fill="#000"/>
 <!-- appearance -->
 <defs>
  <linearGradient id="rb" x1="0" y1="0" x2="1" y2="1"><stop offset="0" stop-color="#20e040"/><stop offset="0.3" stop-color="#f0e020"/><stop offset="0.55" stop-color="#f07020"/><stop offset="0.75" stop-color="#f020c0"/><stop offset="1" stop-color="#20c0f0"/></linearGradient>
 </defs>
 <ellipse cx="225.5" cy="518.2" rx="6.6" ry="4.6" fill="none" stroke="url(#rb)" stroke-width="2.6"/>
 <path d="M220.5 518.5 Q225.5 514 231 518 Q225.5 522.5 220.5 518.5 Z" fill="#f4f4f4" stroke="#000" stroke-width="1.1"/>
 <circle cx="225.6" cy="518.4" r="2" fill="#1a4a50"/>
 <!-- background -->
 <path d="M218 537 Q217 532 221.5 530.8 L227 530.8 Q230.5 533 230.6 537 Q230 539.6 226 540 L222.5 541 L221 543.5 Q219 542.5 218.6 540 Z" fill="none" stroke="#1a40e0" stroke-width="1.9"/>
 <rect x="230" y="543.2" width="2.2" height="2" fill="#1040e8"/>
</svg>

<!-- scrollbar -->
<div class="a" style="left:633px;top:187px;width:1px;height:398px;background:#e4e4e4"></div>
<div class="a" style="left:634px;top:168px;width:17px;height:417px;background:linear-gradient(90deg,#e6e6e6,#f0f0f0 40%,#e8e8e8)"></div>
<div class="a" style="left:635px;top:186px;width:15px;height:334px;border:1px solid #8c8c8c;border-radius:2px;background:linear-gradient(90deg,#f4f4f4,#eaeaea 45%,#d8d8dc 55%,#cacad0)"></div>
<svg style="left:0;top:0" width="658" height="610">
 <path d="M640 179 L643.5 175 L647 179 Z" fill="#1a1a1a"/>
 <path d="M640 575.5 H647 L643.5 579.5 Z" fill="#1a1a1a"/>
 <g stroke="#2a2a2a" stroke-width="1"><path d="M639.5 349.5 H646 M639.5 352.5 H646 M639.5 355.5 H646"/></g>
 <g stroke="#fff" stroke-width="1"><path d="M639.5 350.5 H646 M639.5 353.5 H646 M639.5 356.5 H646"/></g>
</svg>
<div class="a" style="left:198px;top:585px;width:453px;height:1px;background:#555"></div>
<div class="t" style="left:200px;top:587px;font-size:11px;line-height:14px">All Themes</div>

<!-- GRID END -->
</body></html>
